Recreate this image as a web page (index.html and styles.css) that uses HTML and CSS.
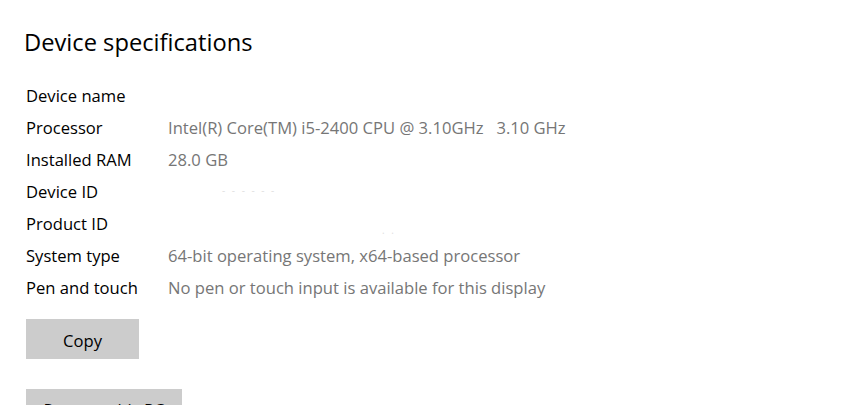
FILE: index.html
```html
<!DOCTYPE html>
<html>
<head>
<meta charset="utf-8">
<link rel="stylesheet" href="styles.css">
</head>
<body>
<div class="page">
  <h1 class="title">Device specifications</h1>
  <div class="specs">
    <div class="row"><span class="label">Device name</span><span class="value"></span></div>
    <div class="row"><span class="label">Processor</span><span class="value">Intel(R) Core(TM) i5-2400 CPU @ 3.10GHz&nbsp;&nbsp;&nbsp;3.10 GHz</span></div>
    <div class="row"><span class="label">Installed RAM</span><span class="value">28.0 GB</span></div>
    <div class="row"><span class="label">Device ID</span><span class="value"><span class="redact r1">- - - - - -</span></span></div>
    <div class="row"><span class="label">Product ID</span><span class="value"><span class="redact r2">. .</span></span></div>
    <div class="row"><span class="label">System type</span><span class="value">64-bit operating system, x64-based processor</span></div>
    <div class="row"><span class="label">Pen and touch</span><span class="value">No pen or touch input is available for this display</span></div>
  </div>
  <div class="buttons">
    <button class="btn copy">Copy</button>
    <button class="btn rename">Rename this PC</button>
  </div>
</div>
</body>
</html>
```
FILE: styles.css
```css
html, body {
  margin: 0;
  padding: 0;
  background: #ffffff;
  overflow: hidden;
}
body {
  font-family: "Open Sans", "Noto Sans", sans-serif;
  color: #000;
}
.page {
  padding: 26px 0 0 24px;
}
.title {
  margin: 0;
  font-weight: 400;
  font-size: 23.7px;
  line-height: 32px;
  color: #000;
}
.specs {
  margin-top: 21px;
  padding-left: 2px;
}
.row {
  display: flex;
  height: 32px;
  align-items: center;
  font-size: 16.6px;
}
.label {
  width: 142px;
  flex: none;
  color: #000;
}
.value {
  color: #767676;
  white-space: pre;
}
.redact {
  color: #e0e0e0;
  font-size: 10px;
  letter-spacing: 2px;
}
.r1 { margin-left: 54px; position: relative; top: -4px; }
.r2 { margin-left: 214px; position: relative; top: 4px; }
.buttons {
  display: flex;
  flex-direction: column;
  align-items: flex-start;
  gap: 30px;
  padding-left: 2px;
  margin-top: 16px;
}
.btn {
  border: none;
  background: #cccccc;
  font-family: inherit;
  font-size: 16.6px;
  color: #000;
  height: 40px;
  padding: 0;
}
.copy { width: 113px; padding-top: 2px; }
.rename { width: 156px; }
```
